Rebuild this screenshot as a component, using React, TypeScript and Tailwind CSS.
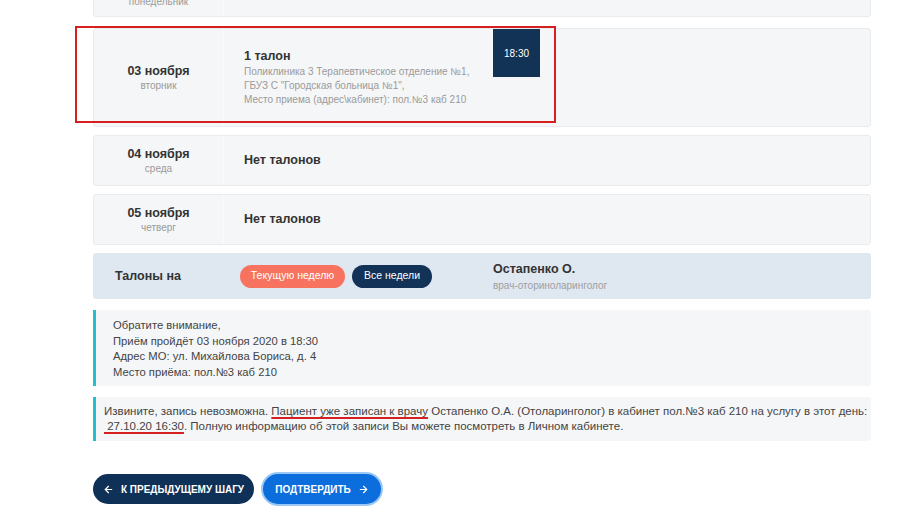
import React from "react";

const font = { fontFamily: '"Liberation Sans", Arial, sans-serif' };

function DayCard({ date, day, children, h }: { date: string; day: string; children: React.ReactNode; h: string }) {
  return (
    <div className={`flex rounded-[3px] border border-[#e9ecef] bg-[#f5f6f8] ${h}`}>
      <div className="flex w-[130px] shrink-0 flex-col items-center justify-center border-r border-[#fbfbfc]">
        <div className="text-[12.5px] font-bold leading-[16px] text-[#333]">{date}</div>
        <div className="text-[10px] leading-[14px] text-[#9a9a9a]">{day}</div>
      </div>
      <div className="flex flex-1 pl-[20px]">{children}</div>
    </div>
  );
}

export default function App() {
  return (
    <div className="h-[522px] w-[900px] overflow-hidden bg-white" style={font}>
      <div className="ml-[93px] w-[778px]">
        {/* partial top card */}
        <div className="-mt-[30px]">
          <DayCard date="02 ноября" day="понедельник" h="h-[47px]">
            <div className="flex items-center text-[13px] font-bold text-[#333]"></div>
          </DayCard>
        </div>

        <div className="relative mt-[11px]">
          <DayCard date="03 ноября" day="вторник" h="h-[99px]">
            <div className="flex w-[249px] flex-col justify-center">
              <div className="text-[12.5px] font-bold leading-[17px] text-[#333]">1 талон</div>
              <div className="text-[10px] leading-[14px] text-[#9a9a9a]">
                Поликлиника 3 Терапевтическое отделение №1,
                <br />
                ГБУЗ С "Городская больница №1",
                <br />
                Место приема (адрес\кабинет): пол.№3 каб 210
              </div>
            </div>
            <div className="flex h-[48px] w-[47px] items-center justify-center bg-[#123256] text-[10px] text-white">
              18:30
            </div>
          </DayCard>
          <div className="pointer-events-none absolute left-[-18px] top-[-2px] h-[97px] w-[481px] border-2 border-[#d61f1f]" />
        </div>

        <div className="mt-[8px]">
          <DayCard date="04 ноября" day="среда" h="h-[51px]">
            <div className="flex items-center text-[12.5px] font-bold text-[#333]">Нет талонов</div>
          </DayCard>
        </div>
        <div className="mt-[8px]">
          <DayCard date="05 ноября" day="четверг" h="h-[51px]">
            <div className="flex items-center text-[12.5px] font-bold text-[#333]">Нет талонов</div>
          </DayCard>
        </div>

        {/* filter bar */}
        <div className="mt-[8px] flex h-[46px] items-center rounded-[3px] bg-[#dfe7f0] pl-[22px]">
          <div className="w-[125px] text-[12.5px] font-bold text-[#333]">Талоны на</div>
          <div className="flex h-[23px] w-[105px] items-center justify-center rounded-full bg-[#f7735f] text-[10.5px] text-white">
            Текущую неделю
          </div>
          <div className="ml-[7px] flex h-[23px] w-[80px] items-center justify-center rounded-full bg-[#133257] text-[10.5px] text-white">
            Все недели
          </div>
          <div className="ml-[61px] flex flex-col">
            <div className="text-[12.5px] font-bold leading-[16px] text-[#333]">Остапенко О.</div>
            <div className="mt-[2px] text-[10px] leading-[13px] text-[#a0a0a0]">врач-оториноларинголог</div>
          </div>
        </div>

        {/* notice 1 */}
        <div className="mt-[11px] rounded-r-[3px] border-l-[3px] border-[#22bfd0] bg-[#f5f6f8] pb-[6px] pt-[8px] pl-[17px] text-[11.25px] leading-[15.5px] text-[#444]">
          Обратите внимание,
          <br />
          Приём пройдёт 03 ноября 2020 в 18:30
          <br />
          Адрес МО: ул. Михайлова Бориса, д. 4
          <br />
          Место приёма: пол.№3 каб 210
        </div>

        {/* notice 2 */}
        <div className="mt-[11px] rounded-r-[3px] border-l-[3px] border-[#22bfd0] bg-[#f5f6f8] py-[7px] pl-[8px] text-[11.5px] leading-[15px] text-[#444]">
          Извините, запись невозможна.{" "}
          <span className="underline decoration-[#d61f1f] decoration-2 underline-offset-[2px]">Пациент уже записан к врачу</span>{" "}
          Остапенко О.А. (Отоларинголог) в кабинет пол.№3 каб 210 на услугу в этот день:
          <br />
          <span className="underline decoration-[#d61f1f] decoration-2 underline-offset-[2px]">&nbsp;27.10.20 16:30</span>. Полную информацию об этой записи Вы можете посмотреть в Личном кабинете.
        </div>

        {/* buttons */}
        <div className="mt-[33px] flex items-center">
          <button className="flex h-[30px] w-[161px] items-center justify-center gap-[7px] rounded-full bg-[#0f3057] text-[10px] font-bold uppercase text-white">
            <svg width="11" height="11" viewBox="0 0 24 24" fill="none" stroke="currentColor" strokeWidth="2.6" strokeLinecap="round" strokeLinejoin="round">
              <path d="M19 12H5" />
              <path d="M12 19l-7-7 7-7" />
            </svg>
            К предыдущему шагу
          </button>
          <button className="ml-[9px] flex h-[30px] w-[118px] items-center justify-center gap-[7px] rounded-full bg-[#0b6edc] text-[10px] font-bold uppercase text-white ring-2 ring-[#9cc8f5]">
            Подтвердить
            <svg width="11" height="11" viewBox="0 0 24 24" fill="none" stroke="currentColor" strokeWidth="2.6" strokeLinecap="round" strokeLinejoin="round">
              <path d="M5 12h14" />
              <path d="M12 5l7 7-7 7" />
            </svg>
          </button>
        </div>
      </div>
    </div>
  );
}
